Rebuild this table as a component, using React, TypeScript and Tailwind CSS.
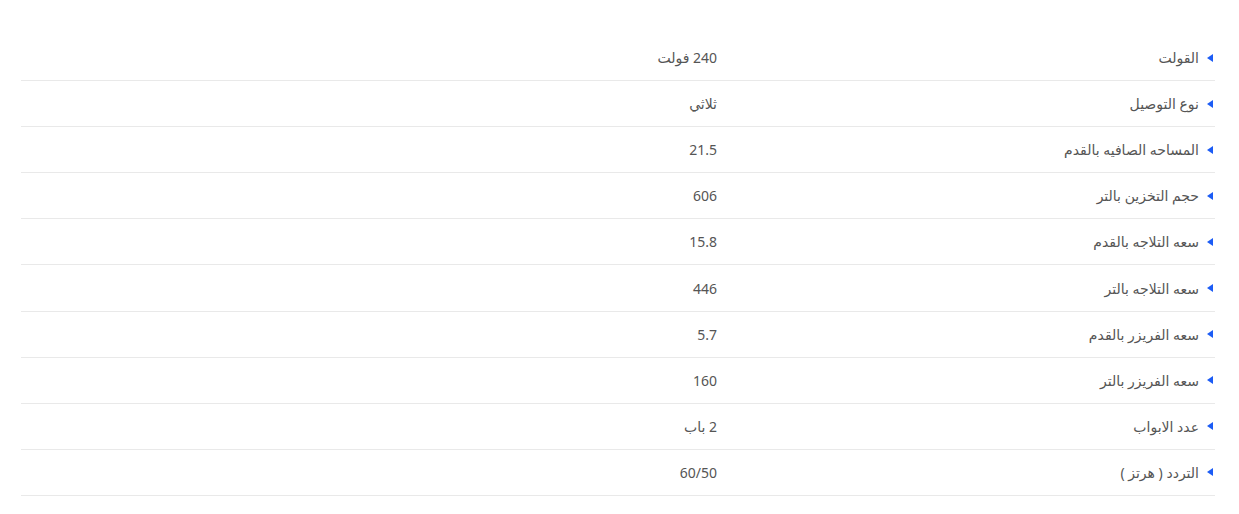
const specs = [
  { label: 'القولت', value: '240 فولت' },
  { label: 'نوع التوصيل', value: 'ثلاثي' },
  { label: 'المساحه الصافيه بالقدم', value: '21.5' },
  { label: 'حجم التخزين بالتر', value: '606' },
  { label: 'سعه التلاجه بالقدم', value: '15.8' },
  { label: 'سعه التلاجه بالتر', value: '446' },
  { label: 'سعه الفريزر بالقدم', value: '5.7' },
  { label: 'سعه الفريزر بالتر', value: '160' },
  { label: 'عدد الابواب', value: '2 باب' },
  { label: 'التردد ( هرتز )', value: '60/50' },
];

export default function App() {
  return (
    <div className="min-h-[514px] bg-white pt-[35px] pl-[21px] pr-[24px] font-['Noto_Sans','DejaVu_Sans',sans-serif]">
      <div dir="rtl" className="flex flex-col">
        {specs.map(s => (
          <div key={s.label} className="flex h-[46.1px] items-center border-b border-[#e9e9e9] text-[14px] text-[#555]">
            {/* key column */}
            <div className="flex w-[498px] items-center gap-[8px] pr-[2px]">
              <span className="h-0 w-0 border-y-[4.5px] border-y-transparent border-r-[6px] border-r-[#1c5cf5]" />
              <span>{s.label}</span>
            </div>
            {/* value column */}
            <div className="flex-1">{s.value}</div>
          </div>
        ))}
      </div>
    </div>
  );
}
